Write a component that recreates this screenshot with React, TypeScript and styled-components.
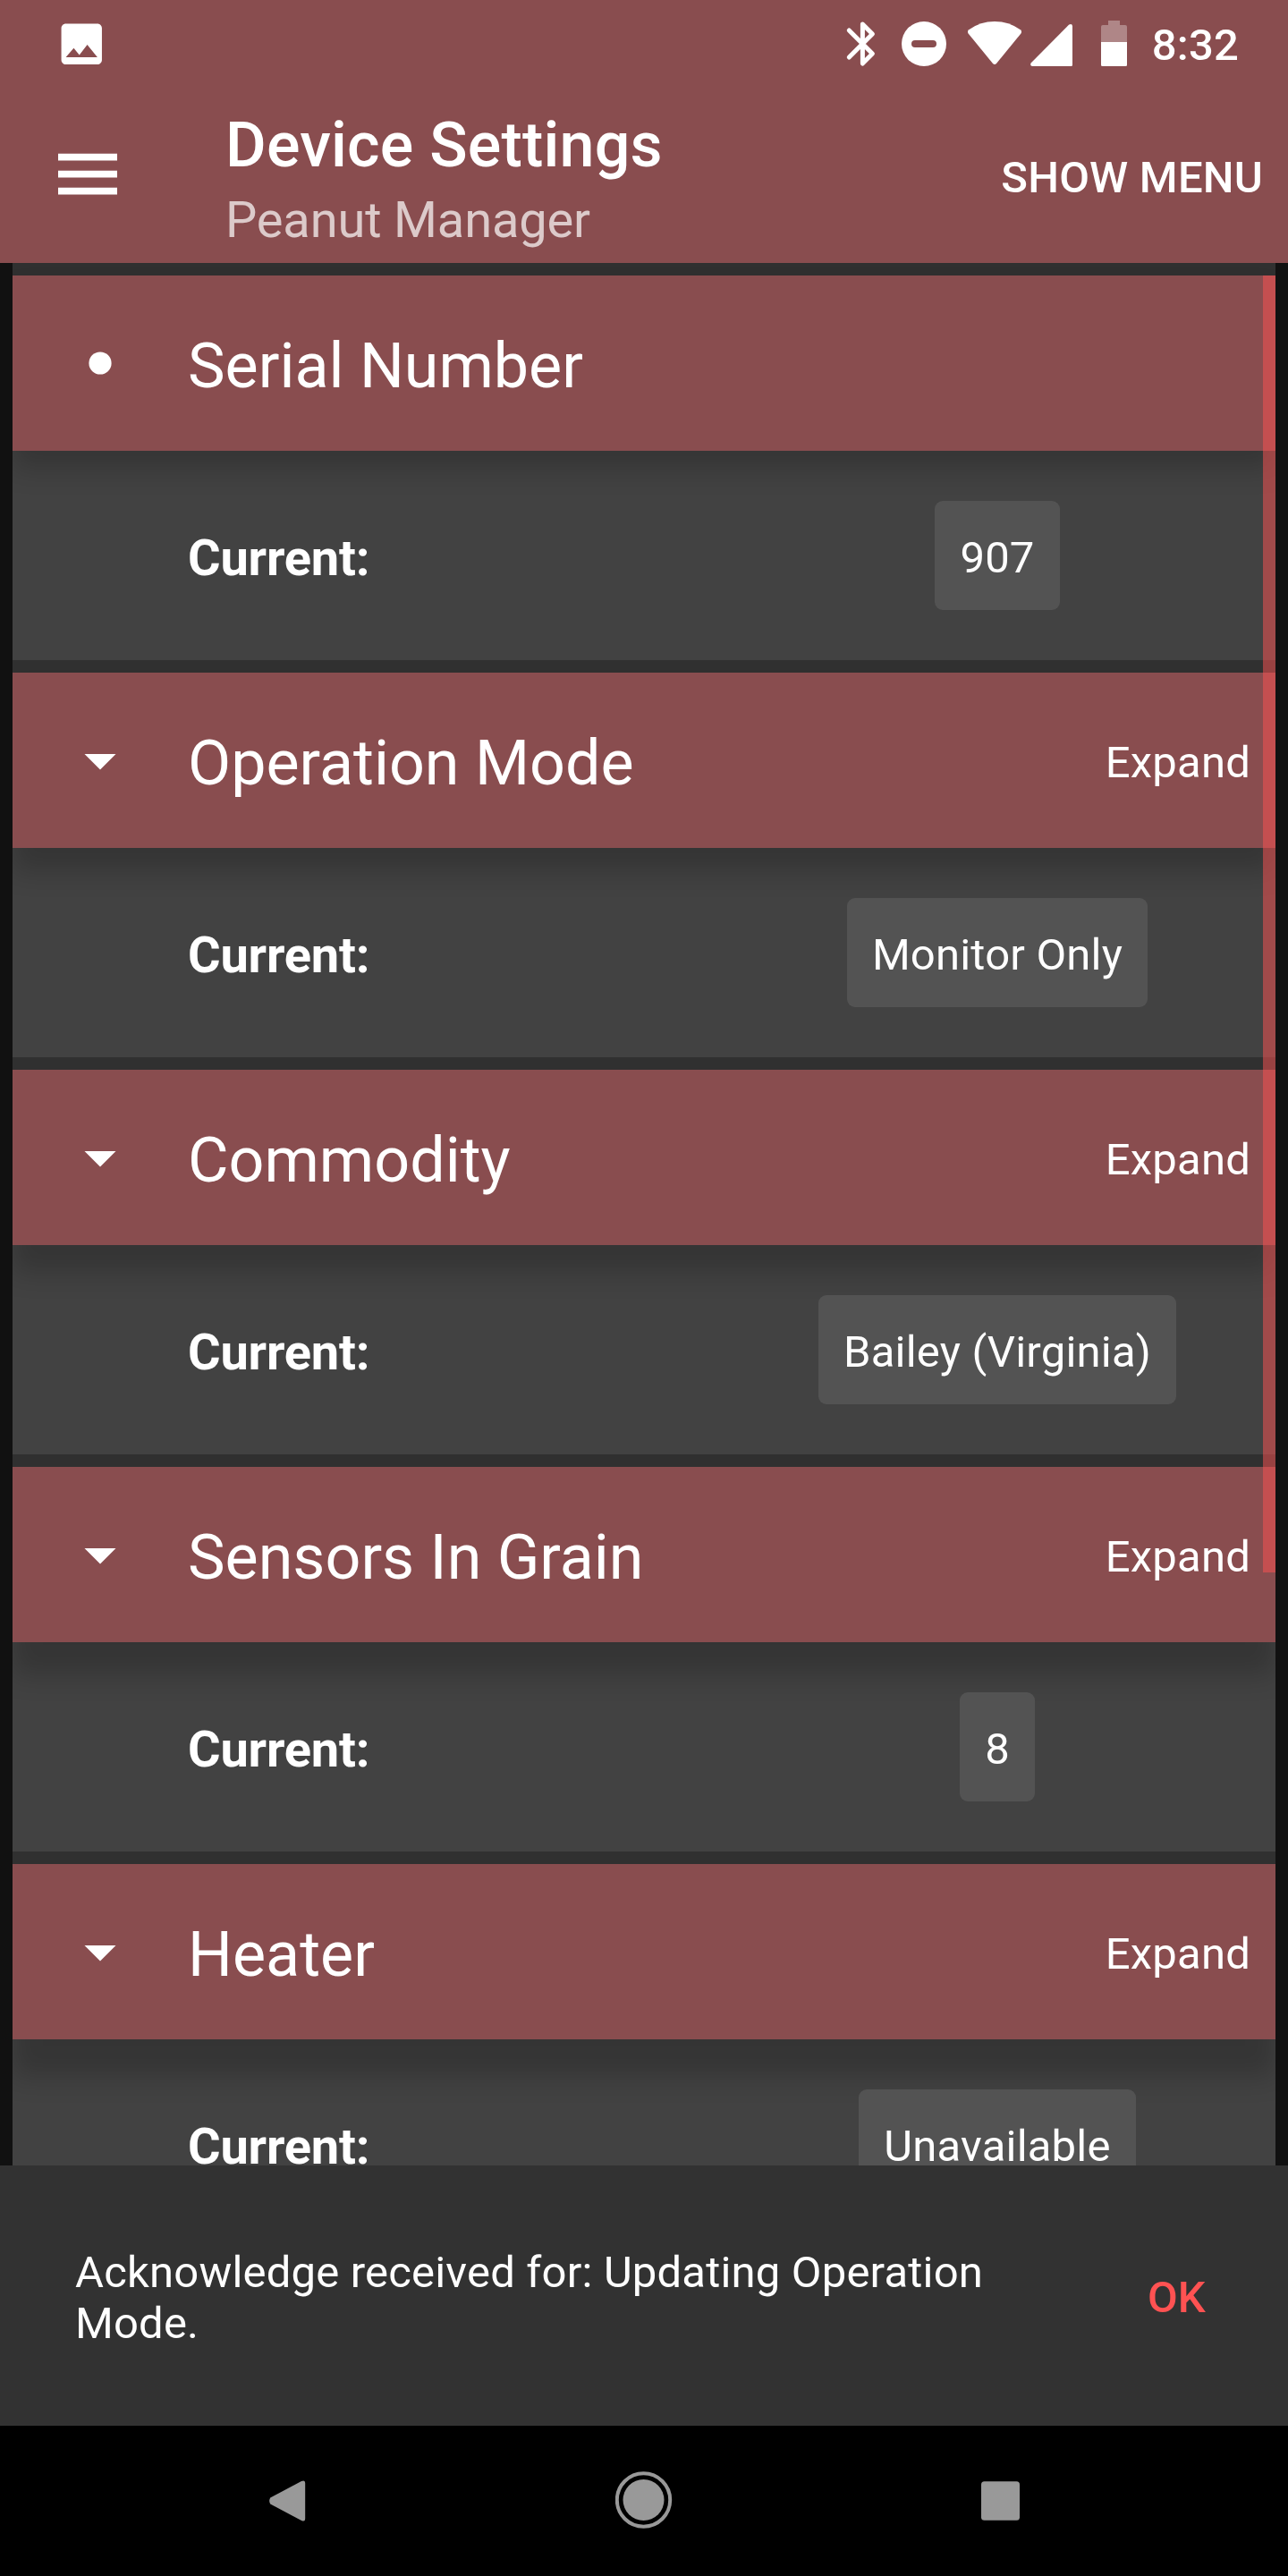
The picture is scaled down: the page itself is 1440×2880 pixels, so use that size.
import React from "react";
import styled, { createGlobalStyle } from "styled-components";

const GlobalStyle = createGlobalStyle`
  *, *::before, *::after { box-sizing: border-box; }
  body {
    margin: 0;
    background: #000;
    color: #fff;
    font-family: Roboto, "Noto Sans", sans-serif;
  }
  button {
    margin: 0;
    padding: 0;
    border: 0;
    background: none;
    color: inherit;
    font: inherit;
  }
  svg { display: block; flex: none; }
`;

const Screen = styled.div`
  display: flex;
  flex-direction: column;
  width: 1440px;
  height: 2880px;
  overflow: hidden;
`;

const Header = styled.header`
  flex: none;
  height: 294px;
  background: #894d4f;
`;

const StatusBar = styled.div`
  display: flex;
  justify-content: space-between;
  align-items: center;
  height: 98px;
  padding: 0 55px 0 61px;
`;

const StatusIcons = styled.div`
  display: flex;
  align-items: center;
`;

const Clock = styled.span`
  margin-left: 26px;
  padding-top: 4px;
  font-size: 49px;
  line-height: 58px;
  font-weight: 500;
  letter-spacing: 0.2px;
`;

const Toolbar = styled.div`
  display: flex;
  align-items: center;
  height: 196px;
  padding: 0 28px 0 65px;
`;

const Titles = styled.div`
  flex: 1;
  margin-left: 121px;
  padding-top: 10px;
`;

const Title = styled.h1`
  margin: 0;
  font-size: 70px;
  line-height: 82px;
  font-weight: 500;
  letter-spacing: 0.2px;
`;

const Subtitle = styled.p`
  margin: 8px 0 0;
  font-size: 56px;
  line-height: 70px;
  letter-spacing: -0.15px;
  color: rgba(255, 255, 255, 0.7);
`;

const MenuButton = styled.button`
  padding-top: 5px;
  font-size: 49px;
  line-height: 58px;
  font-weight: 500;
  letter-spacing: 0.2px;
`;

const Content = styled.main`
  position: relative;
  flex: 1;
  min-height: 0;
  padding: 0 14px;
  background: #111;
  overflow: hidden;
`;

const SettingList = styled.div`
  display: flex;
  flex-direction: column;
  gap: 14px;
  padding-top: 14px;
  background: #303030;
  overflow: hidden;
`;

const Card = styled.section`
  flex: none;
  height: 430px;
  background: #424242;
`;

const CardHeader = styled.div<{ $shadow: number }>`
  display: flex;
  align-items: center;
  height: 196px;
  padding: 0 28px 0 56px;
  background: #894d4f;
  box-shadow: 0 ${(p) => p.$shadow}px 28px rgba(0, 0, 0, 0.2);
`;

const CardTitle = styled.h2`
  flex: 1;
  margin: 0 0 0 56px;
  padding-top: 5px;
  font-size: 70px;
  line-height: 82px;
  font-weight: 400;
`;

const ExpandButton = styled.button`
  padding-top: 5px;
  font-size: 49px;
  line-height: 58px;
  letter-spacing: 0.2px;
`;

const CardBody = styled.div`
  position: relative;
  display: grid;
  grid-template-columns: 608px 594px;
  align-items: center;
  height: 234px;
  padding-left: 196px;
`;

const Label = styled.span`
  padding-top: 6px;
  font-size: 56px;
  line-height: 66px;
  font-weight: 700;
  letter-spacing: -0.2px;
`;

const Value = styled.span`
  justify-self: center;
  height: 122px;
  padding: 35px 28px 0;
  border-radius: 9px;
  background: #535353;
  font-size: 49px;
  line-height: 58px;
  letter-spacing: 0.2px;
`;

const ScrollThumb = styled.div`
  position: absolute;
  top: 14px;
  right: 14px;
  width: 14px;
  height: 1450px;
  background: rgba(255, 82, 82, 0.5);
`;

const Snackbar = styled.div`
  flex: none;
  display: flex;
  align-items: center;
  justify-content: space-between;
  height: 291px;
  padding: 0 92px 0 84px;
  background: #323232;
`;

const Message = styled.p`
  width: 1060px;
  margin: 0;
  padding-top: 5px;
  font-size: 49px;
  line-height: 57px;
  letter-spacing: 0.19px;
`;

const SnackbarAction = styled.button`
  padding-top: 4px;
  color: #ff5252;
  font-size: 49px;
  line-height: 58px;
  font-weight: 500;
  letter-spacing: 0.2px;
`;

const NavBar = styled.nav`
  flex: none;
  display: flex;
  align-items: center;
  justify-content: space-between;
  height: 168px;
  padding: 0 300px;
  background: #000;
  color: #999;
`;

const ImageIcon = () => (
  <svg width="60.5" height="60.5" viewBox="0 0 24 24" fill="#fff">
    <path d="M21 19V5c0-1.1-.9-2-2-2H5c-1.1 0-2 .9-2 2v14c0 1.1.9 2 2 2h14c1.1 0 2-.9 2-2zM8.5 13.8l2.5 3.01L14.5 12.3l4.5 5.6H5z" />
  </svg>
);

/* Bluetooth, do-not-disturb, wifi, cell signal and battery share one strip. */
const SystemIcons = () => (
  <svg width="320" height="98" viewBox="942 0 320 98" fill="#fff">
    <path
      d="M949.3 34L975.4 60L964.4 71V27L975.4 38L949.3 64"
      fill="none"
      stroke="#fff"
      strokeWidth="5"
      strokeLinecap="round"
      strokeLinejoin="round"
    />
    <circle cx="1033" cy="49" r="25" />
    <rect x="1019" y="45" width="28" height="8" rx="4" fill="#894d4f" />
    <path d="M1082.6 37.5Q1081 35 1083.2 33.2Q1096 24 1112 24T1140.8 33.2Q1143 35 1141.4 37.5L1114 71Q1112 73 1110 71Z" />
    <path d="M1152.6 70.5L1195.2 27.6Q1199 25.5 1199 29.5V72.5Q1199 74 1197.5 74H1154Q1151.3 73.5 1152.6 70.5Z" />
    <path
      d="M1231 47V30Q1231 28 1233 28H1239V23H1252V28H1258Q1260 28 1260 30V47Z"
      opacity="0.32"
    />
    <path d="M1231 47H1260V72.5Q1260 74 1258.5 74H1232.5Q1231 74 1231 72.5Z" />
  </svg>
);

const HamburgerIcon = () => (
  <svg width="66" height="50" viewBox="0 0 66 50" fill="#fff">
    <path d="M0 .7H66V8.5H0zM0 19.7H66V27.5H0zM0 38.7H66V46.5H0z" />
  </svg>
);

const CaretIcon = () => (
  <svg width="84" height="84" viewBox="0 0 24 24" fill="#fff">
    <path d="M7 10l5 5 5-5z" />
  </svg>
);

const DotIcon = () => (
  <svg width="84" height="84" viewBox="0 0 84 84" fill="#fff">
    <circle cx="42" cy="42" r="12.6" />
  </svg>
);

const BackIcon = () => (
  <svg width="43" height="48" viewBox="0 0 43 48" fill="currentColor">
    <path d="M2.2 20.5L37 2Q41.2 .2 41.2 4V44Q41.2 47.8 37 46L2.2 27.5Q.2 24 2.2 20.5Z" />
  </svg>
);

const HomeIcon = () => (
  <svg width="64" height="66" viewBox="0 0 64 66" fill="currentColor">
    <circle cx="31.5" cy="32" r="29.7" fill="none" stroke="currentColor" strokeWidth="4" />
    <circle cx="31.5" cy="32" r="23" />
  </svg>
);

const RecentsIcon = () => (
  <svg width="43" height="44" viewBox="0 0 43 44" fill="currentColor">
    <rect y=".3" width="43" height="43.4" rx="3.5" />
  </svg>
);

interface Setting {
  name: string;
  value: string;
  expandable: boolean;
  shadow: number;
}

const settings: Setting[] = [
  { name: "Serial Number", value: "907", expandable: false, shadow: 20 },
  { name: "Operation Mode", value: "Monitor Only", expandable: true, shadow: 26 },
  { name: "Commodity", value: "Bailey (Virginia)", expandable: true, shadow: 31 },
  { name: "Sensors In Grain", value: "8", expandable: true, shadow: 37 },
  { name: "Heater", value: "Unavailable", expandable: true, shadow: 42 },
];

const SettingCard = ({ name, value, expandable, shadow }: Setting) => (
  <Card>
    <CardHeader $shadow={shadow}>
      {expandable ? <CaretIcon /> : <DotIcon />}
      <CardTitle>{name}</CardTitle>
      {expandable && <ExpandButton>Expand</ExpandButton>}
    </CardHeader>
    <CardBody>
      <Label>Current:</Label>
      <Value>{value}</Value>
    </CardBody>
  </Card>
);

export default function App() {
  return (
    <Screen>
      <GlobalStyle />
      <Header>
        <StatusBar>
          <ImageIcon />
          <StatusIcons>
            <SystemIcons />
            <Clock>8:32</Clock>
          </StatusIcons>
        </StatusBar>
        <Toolbar>
          <HamburgerIcon />
          <Titles>
            <Title>Device Settings</Title>
            <Subtitle>Peanut Manager</Subtitle>
          </Titles>
          <MenuButton>SHOW MENU</MenuButton>
        </Toolbar>
      </Header>
      <Content>
        <SettingList>
          {settings.map((s) => (
            <SettingCard key={s.name} {...s} />
          ))}
        </SettingList>
        <ScrollThumb />
      </Content>
      <Snackbar>
        <Message>Acknowledge received for: Updating Operation Mode.</Message>
        <SnackbarAction>OK</SnackbarAction>
      </Snackbar>
      <NavBar>
        <BackIcon />
        <HomeIcon />
        <RecentsIcon />
      </NavBar>
    </Screen>
  );
}
